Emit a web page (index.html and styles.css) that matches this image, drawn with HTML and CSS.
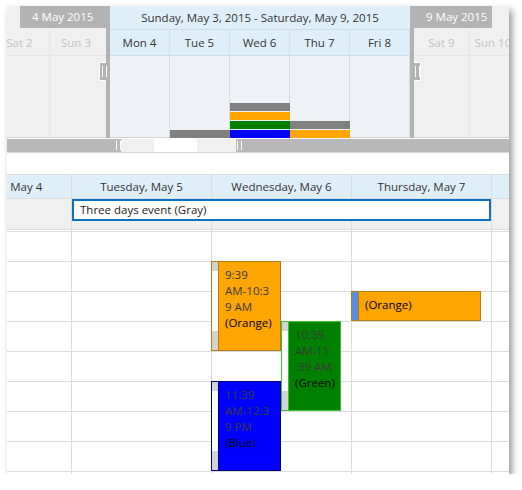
FILE: index.html
```html
<!DOCTYPE html>
<html>
<head>
<meta charset="utf-8">
<title>Scheduler</title>
<link rel="stylesheet" href="styles.css">
</head>
<body>
<div class="panel">
  <div class="nav">
    <div class="nav-side nav-left">
      <div class="nav-head"><span class="nav-label">4 May 2015</span></div>
      <div class="nav-days">
        <div class="od od-l1">Sat 2</div>
        <div class="od od-l2">Sun 3</div>
      </div>
      <div class="nav-body">
        <div class="ob od-l1"></div>
        <div class="ob od-l2"></div>
      </div>
    </div>
    <div class="nav-bar"><span class="grip grip-l"></span></div>
    <div class="nav-mid">
      <div class="nav-title">Sunday, May 3, 2015 - Saturday, May 9, 2015</div>
      <div class="mid-days">
        <div class="md">Mon 4</div>
        <div class="md">Tue 5</div>
        <div class="md">Wed 6</div>
        <div class="md">Thu 7</div>
        <div class="md">Fri 8</div>
      </div>
      <div class="mid-body">
        <div class="mb"></div>
        <div class="mb"><span class="bar b-gray"></span></div>
        <div class="mb"><span class="bar b-gray"></span><span class="bar b-orange"></span><span class="bar b-green"></span><span class="bar b-blue"></span></div>
        <div class="mb"><span class="bar b-gray"></span><span class="bar b-orange"></span></div>
        <div class="mb"></div>
      </div>
    </div>
    <div class="nav-bar"><span class="grip grip-r"></span></div>
    <div class="nav-side nav-right">
      <div class="nav-head"><span class="nav-label">9 May 2015</span></div>
      <div class="nav-days">
        <div class="od od-r1">Sat 9</div>
        <div class="od od-r2">Sun 10</div>
      </div>
      <div class="nav-body">
        <div class="ob od-r1"></div>
        <div class="ob od-r2"></div>
      </div>
    </div>
  </div>

  <div class="scroll">
    <span class="s-seg s-gray s-w1"></span>
    <span class="s-grip"></span>
    <span class="s-seg s-light s-w2"></span>
    <span class="s-seg s-white s-w3"></span>
    <span class="s-seg s-light s-w4"></span>
    <span class="s-grip"></span>
    <span class="s-seg s-gray s-rest"></span>
  </div>
  <div class="scroll-line"></div>
  <div class="gap"></div>

  <div class="dv">
    <div class="row hrow">
      <div class="c mon">Monday, May 4</div>
      <div class="c">Tuesday, May 5</div>
      <div class="c">Wednesday, May 6</div>
      <div class="c">Thursday, May 7</div>
      <div class="c gut"></div>
    </div>
    <div class="row arow">
      <div class="c mon"></div><div class="c"></div><div class="c"></div><div class="c"></div><div class="c gut"></div>
    </div>
    <div class="row srow">
      <div class="c mon"></div><div class="c"></div><div class="c"></div><div class="c"></div><div class="c gut"></div>
    </div>
    <div class="allday-ev">Three days event (Gray)</div>

    <div class="grid">
      <div class="row trow"><div class="c mon"></div><div class="c"></div><div class="c"></div><div class="c"></div><div class="c gut"></div></div>
      <div class="row trow"><div class="c mon"></div><div class="c"></div><div class="c"></div><div class="c"></div><div class="c gut"></div></div>
      <div class="row trow"><div class="c mon"></div><div class="c"></div><div class="c"></div><div class="c"></div><div class="c gut"></div></div>
      <div class="row trow"><div class="c mon"></div><div class="c"></div><div class="c"></div><div class="c"></div><div class="c gut"></div></div>
      <div class="row trow"><div class="c mon"></div><div class="c"></div><div class="c"></div><div class="c"></div><div class="c gut"></div></div>
      <div class="row trow"><div class="c mon"></div><div class="c"></div><div class="c"></div><div class="c"></div><div class="c gut"></div></div>
      <div class="row trow"><div class="c mon"></div><div class="c"></div><div class="c"></div><div class="c"></div><div class="c gut"></div></div>
      <div class="row trow"><div class="c mon"></div><div class="c"></div><div class="c"></div><div class="c"></div><div class="c gut"></div></div>
      <div class="row trow"><div class="c mon"></div><div class="c"></div><div class="c"></div><div class="c"></div><div class="c gut"></div></div>

      <div class="ev ev-orange ev-pos-a">
        <div class="strip"><i class="off top9"></i><i class="on"></i><i class="off rest"></i></div>
        <div class="ev-text"><div class="t">9:39</div><div class="t">AM-10:3</div><div class="t">9 AM</div><div class="s">(Orange)</div></div>
      </div>
      <div class="ev ev-green ev-pos-b">
        <div class="strip"><i class="off top9"></i><i class="on"></i><i class="off rest"></i></div>
        <div class="ev-text"><div class="t">10:39</div><div class="t">AM-11</div><div class="t">:39 AM</div><div class="s">(Green)</div></div>
      </div>
      <div class="ev ev-blue ev-pos-c">
        <div class="strip"><i class="off top9"></i><i class="on"></i><i class="off rest"></i></div>
        <div class="ev-text"><div class="t">11:39</div><div class="t">AM-12:3</div><div class="t">9 PM</div><div class="s">(Blue)</div></div>
      </div>
      <div class="ev ev-orange ev-pos-d">
        <div class="strip strip-full"></div>
        <div class="ev-text"><div class="s">(Orange)</div></div>
      </div>
    </div>
  </div>
</div>
</body>
</html>
```

FILE: styles.css
```css
* { box-sizing: border-box; }
html, body { margin: 0; padding: 0; background: #fff; }
body {
  font-family: "Open Sans", "Noto Sans", sans-serif;
  font-size: 11.5px;
  color: #333;
}

.panel {
  margin: 6px 0 0 7px;
  width: 502px;
  height: 468px;
  overflow: hidden;
  background: #fff;
  box-shadow: 3px 4px 7px rgba(0, 0, 0, 0.42);
  display: flex;
  flex-direction: column;
}

/* ---------- navigator ---------- */
.nav { display: flex; height: 132px; flex-shrink: 0; }

.nav-side {
  overflow: hidden;
  background: #f0f0f0;
  display: flex;
  flex-direction: column;
  flex-shrink: 0;
}
.nav-left { width: 99px; }
.nav-right { width: 95px; }

.nav-head { height: 24px; flex-shrink: 0; }
.nav-label {
  display: block;
  height: 22px;
  width: 86px;
  background: #b3b3b3;
  color: #fff;
  line-height: 22px;
  padding-left: 12px;
  white-space: nowrap;
}
.nav-left .nav-label { margin-left: 13px; }
.nav-right .nav-label { width: 78px; }

.nav-days {
  height: 26px;
  flex-shrink: 0;
  display: flex;
  border-bottom: 1px solid #e6e6e6;
}
.od {
  flex-shrink: 0;
  text-align: center;
  line-height: 25px;
  color: #c3c3c3;
  white-space: nowrap;
}
.nav-body {
  flex: 1;
  display: flex;
  border-bottom: 1px solid #d6d6d6;
}
.ob { flex-shrink: 0; }
.od-l1 { width: 60px; margin-left: -17px; border-right: 1px solid #e4e4e4; }
.od-l2 { width: 52px; }
.od-r1 { width: 56px; border-right: 1px solid #e4e4e4; }
.od-r2 { width: 46px; }

.nav-bar {
  width: 4px;
  flex-shrink: 0;
  background: #b3b3b3;
  position: relative;
}
.grip {
  position: absolute;
  top: 56px;
  width: 7px;
  height: 19px;
  background: #b3b3b3;
  border: 1px solid #fff;
}
.grip-l { left: -7px; border-right: 0; }
.grip-r { left: 4px; border-left: 0; }
.grip::after {
  content: "";
  position: absolute;
  top: 3px;
  left: 2px;
  width: 3px;
  height: 11px;
  border-left: 1px solid #fff;
  border-right: 1px solid #fff;
}
.grip-r::after { left: 1px; }

.nav-mid {
  width: 300px;
  flex-shrink: 0;
  display: flex;
  flex-direction: column;
}
.nav-title {
  height: 24px;
  flex-shrink: 0;
  background: #dfeffa;
  border-bottom: 1px solid #cfdde8;
  text-align: center;
  line-height: 23px;
  white-space: nowrap;
}
.mid-days {
  height: 26px;
  flex-shrink: 0;
  display: flex;
  background: #dfeffa;
  border-bottom: 1px solid #cfdde8;
}
.md {
  width: 60px;
  text-align: center;
  line-height: 25px;
  border-right: 1px solid #d3dee8;
}
.mid-body {
  flex: 1;
  display: flex;
  background: #eef2f7;
}
.mb {
  width: 60px;
  border-right: 1px solid #d8dde3;
  border-bottom: 1px solid #d3d3d3;
  display: flex;
  flex-direction: column;
  justify-content: flex-end;
  gap: 1px;
}
.bar { display: block; height: 8px; margin-right: -1px; }
.bar:last-child { margin-bottom: -1px; }
.b-gray { background: #808080; }
.b-orange { background: #ffa500; }
.b-green { background: #008000; }
.b-blue { background: #0000ff; }

/* ---------- range scroller ---------- */
.scroll {
  display: flex;
  height: 13px;
  margin-top: 1px;
  flex-shrink: 0;
}
.s-seg { display: block; flex-shrink: 0; }
.s-gray { background: #b8b8b8; }
.s-light { background: #f0f0f0; }
.s-white { background: #fff; }
.s-w1 { width: 108px; }
.s-w2 { width: 33px; }
.s-w3 { width: 43px; }
.s-w4 { width: 39px; }
.s-rest { flex: 1; }
.s-grip {
  display: block;
  width: 6px;
  flex-shrink: 0;
  background: #b8b8b8;
  position: relative;
}
.s-grip::after {
  content: "";
  position: absolute;
  top: 2px;
  left: 1px;
  width: 3px;
  height: 9px;
  border-left: 1px solid #fff;
  border-right: 1px solid #fff;
}
.scroll-line { height: 1px; background: #d6d6d6; flex-shrink: 0; }
.gap { height: 21px; flex-shrink: 0; }

/* ---------- day view ---------- */
.dv {
  position: relative;
  flex: 1;
  border-top: 1px solid #dcdcdc;
  overflow: hidden;
}
.row { display: flex; }
.c {
  flex-shrink: 0;
  width: 140px;
  border-right: 1px solid #dcdcdc;
}
.c.mon { margin-left: -75px; }
.c.gut { flex: 1; width: auto; border-right: 0; }

.hrow {
  height: 24px;
  background: #dfeffa;
  border-bottom: 1px solid #dcdcdc;
}
.hrow .c {
  text-align: center;
  line-height: 23px;
  white-space: nowrap;
}
.arow {
  height: 31px;
  background: #f0f0f0;
  border-bottom: 1px solid #dcdcdc;
}
.srow {
  height: 2px;
  border-bottom: 1px solid #dcdcdc;
}
.allday-ev {
  position: absolute;
  left: 65px;
  top: 24px;
  width: 419px;
  height: 22px;
  border: 2px solid #0b6fc4;
  background: #fff;
  color: #1a1a1a;
  line-height: 17px;
  padding-left: 6px;
  white-space: nowrap;
}

.grid { position: relative; }
.trow {
  height: 30px;
  border-bottom: 1px solid #dcdcdc;
}

.ev {
  position: absolute;
  display: flex;
  border: 1px solid;
  overflow: hidden;
}
.ev-pos-a { left: 204px; top: 29px; width: 70px; height: 90px; }
.ev-pos-b { left: 274px; top: 89px; width: 60px; height: 90px; }
.ev-pos-c { left: 204px; top: 149px; width: 70px; height: 90px; }
.ev-pos-d { left: 344px; top: 59px; width: 130px; height: 30px; }

.ev-orange { background: #ffa500; border-color: #b07d18; }
.ev-green { background: #008000; border-color: #35c235; }
.ev-blue { background: #0000ff; border-color: #000080; }

.strip {
  width: 7px;
  flex-shrink: 0;
  display: flex;
  flex-direction: column;
  border-right: 1px solid;
  border-color: inherit;
}
.strip i { display: block; flex-shrink: 0; }
.strip .off { background: #d3d3d3; }
.strip .on { background: #fff; height: 60px; }
.strip .top9 { height: 9px; }
.strip .rest { flex: 1; }
.strip-full { background: #5b8edf; }

.ev-text {
  padding: 5px 0 0 6px;
  line-height: 16px;
  white-space: nowrap;
}
.ev-text .t { color: #3a3a3a; }
.ev-text .s { color: #000; }
```
